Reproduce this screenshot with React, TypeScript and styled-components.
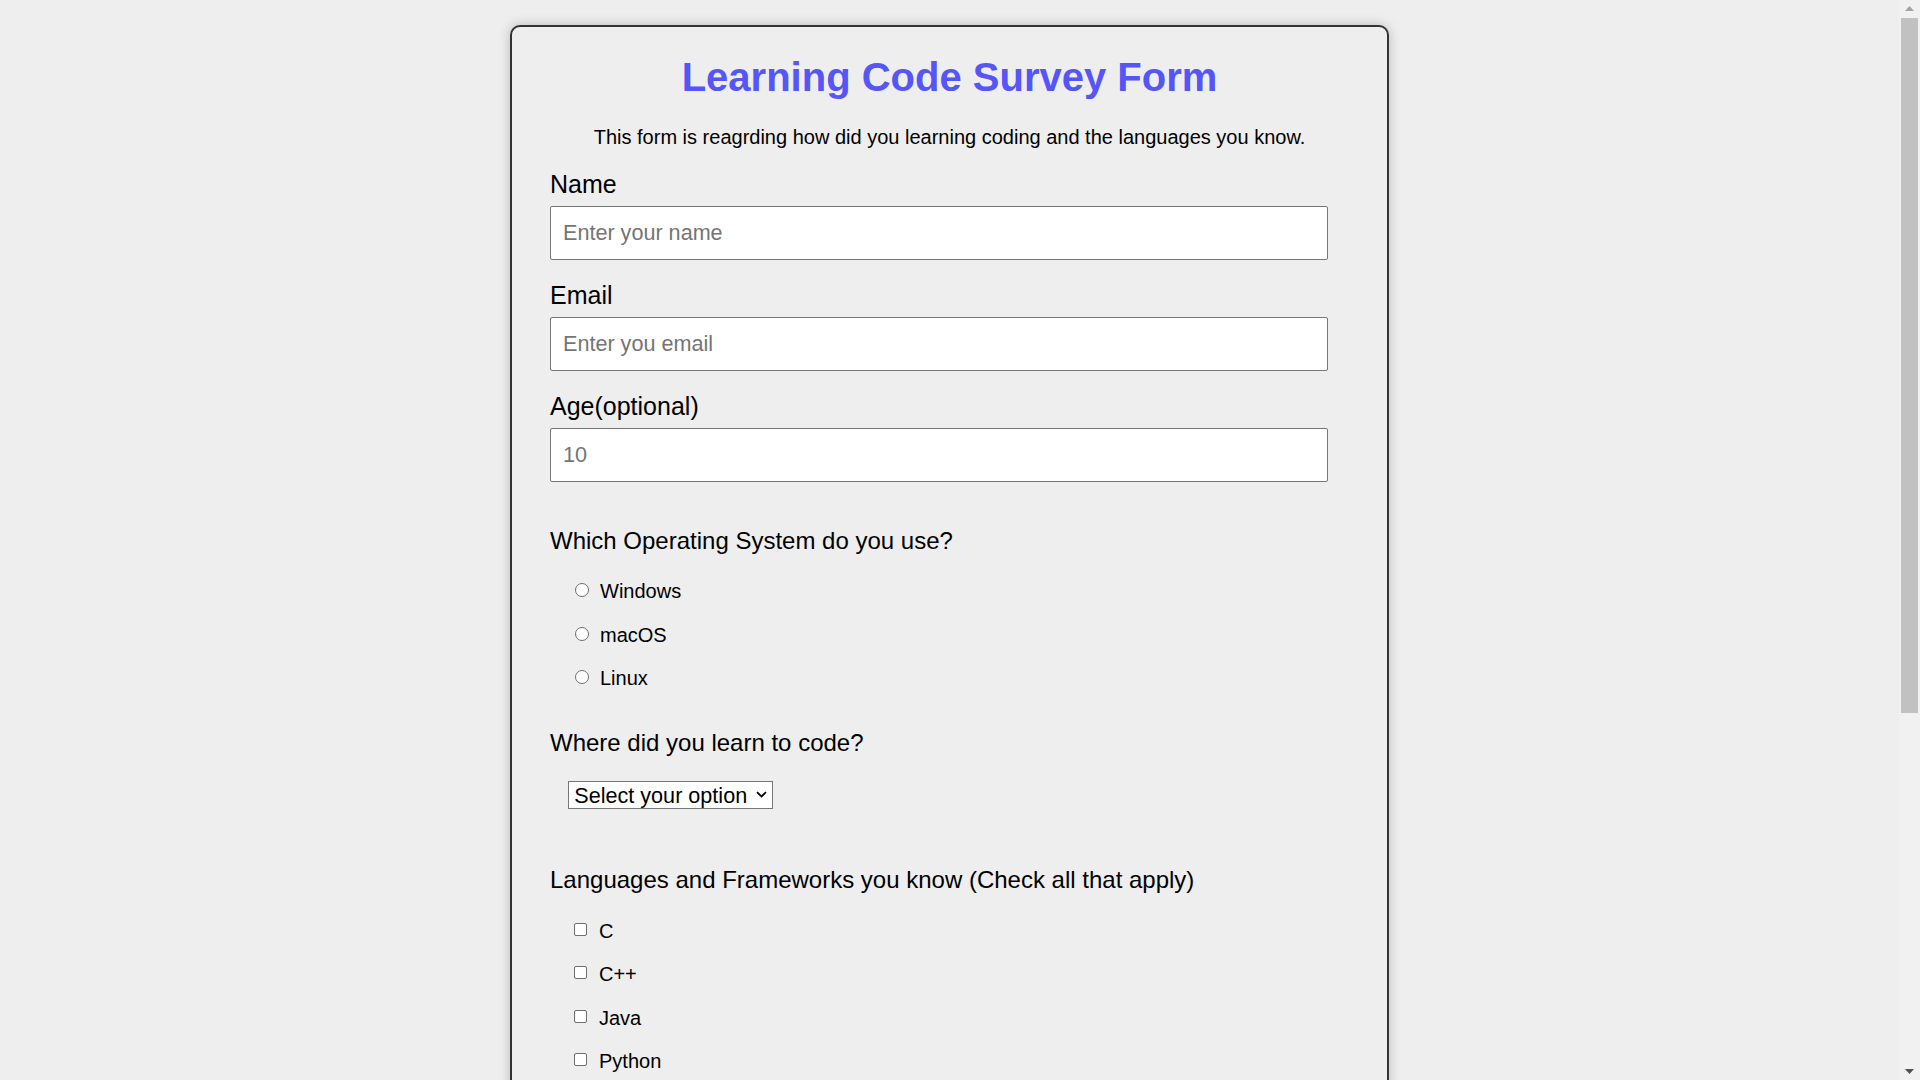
import React from "react";
import styled, { createGlobalStyle } from "styled-components";

const GlobalStyle = createGlobalStyle`
  html, body {
    margin: 0;
    background: #eeeeee;
    font-family: "Liberation Sans", Arial, sans-serif;
    color: #000;
  }
`;

const Page = styled.main`
  padding: 25px 21px 25px 0;
`;

const ScrollBar = styled.div`
  position: fixed;
  top: 0;
  right: 0;
  bottom: 0;
  width: 21px;
  display: flex;
  flex-direction: column;
  background: #f1f1f1;
  z-index: 10;
`;

const ScrollButton = styled.div`
  height: 17px;
  flex: none;
  display: flex;
  align-items: center;
  justify-content: center;
`;

const ScrollTrack = styled.div`
  flex: 1;
  padding: 1px 2px 0;
`;

const ScrollThumb = styled.div`
  height: 695px;
  background: #c1c1c1;
`;

const Card = styled.form`
  box-sizing: border-box;
  width: 879px;
  margin: 0 auto;
  padding: 0 38px 65px;
  background: #eeeeee;
  border: 2px solid #333333;
  border-radius: 10px;
  box-shadow: 0 0 12px rgba(0, 0, 0, 0.22);
`;

const Title = styled.h1`
  margin: 27px 0 0;
  font-size: 40px;
  line-height: 46px;
  font-weight: 700;
  color: #5555f8;
  text-align: center;
`;

const Description = styled.p`
  margin: 26px 0 20px;
  font-size: 20px;
  line-height: 23px;
  text-align: center;
`;

const Fields = styled.div`
  display: flex;
  flex-direction: column;
  gap: 20px;
`;

const Field = styled.div`
  display: flex;
  flex-direction: column;
  gap: 7px;
`;

const FieldLabel = styled.label`
  display: block;
  font-size: 25px;
  line-height: 30px;
`;

const TextInput = styled.input`
  display: block;
  box-sizing: border-box;
  width: 778px;
  height: 54px;
  margin: 0;
  padding: 0 12px;
  font-family: "Liberation Sans", Arial, sans-serif;
  font-size: 21.6px;
  color: #000;
  background: #ffffff;
  border: 1px solid #767676;
  border-radius: 2px;
  outline: none;

  &::placeholder {
    color: #757575;
  }
`;

const Question = styled.p<{ $top: number }>`
  margin: ${(p) => p.$top}px 0 0;
  font-size: 24px;
  line-height: 27.6px;
`;

const OptionList = styled.div<{ $gap: number }>`
  display: flex;
  flex-direction: column;
  gap: ${(p) => p.$gap}px;
  margin-top: 26px;
  padding-left: 20px;
`;

const Option = styled.label`
  display: block;
  height: 23px;
  font-size: 20px;
  line-height: 23px;
`;

const Radio = styled.input.attrs({ type: "radio" })`
  appearance: none;
  box-sizing: border-box;
  width: 14px;
  height: 14px;
  margin: 0 11px 0 5px;
  vertical-align: 1px;
  background: #ffffff;
  border: 1px solid #6f6f6f;
  border-radius: 50%;
`;

const Checkbox = styled.input.attrs({ type: "checkbox" })`
  appearance: none;
  box-sizing: border-box;
  width: 13px;
  height: 13px;
  margin: 0 12px 0 4px;
  vertical-align: 2px;
  background: #ffffff;
  border: 1px solid #6f6f6f;
  border-radius: 2px;
`;

const SelectRow = styled.div`
  margin: 24.7px 0 0 18.3px;
`;

const SelectWrap = styled.div`
  position: relative;
  display: inline-block;
`;

const Dropdown = styled.select`
  appearance: none;
  display: block;
  box-sizing: border-box;
  width: 205px;
  height: 28px;
  margin: 0;
  padding: 0 22px 0 5px;
  font-family: "Liberation Sans", Arial, sans-serif;
  font-size: 21.6px;
  color: #000;
  background: #ffffff;
  border: 1px solid #767676;
  border-radius: 0;
`;

const Chevron = styled.svg`
  position: absolute;
  right: 6px;
  top: 10px;
  pointer-events: none;
`;

const Comments = styled.textarea`
  display: block;
  box-sizing: border-box;
  width: 778px;
  height: 160px;
  margin-top: 24.7px;
  padding: 12px;
  font-family: "Liberation Sans", Arial, sans-serif;
  font-size: 21.6px;
  background: #ffffff;
  border: 1px solid #767676;
  border-radius: 2px;
  resize: vertical;

  &::placeholder {
    color: #757575;
  }
`;

const SubmitButton = styled.button`
  display: block;
  width: 778px;
  height: 45px;
  margin-top: 30px;
  font-family: "Liberation Sans", Arial, sans-serif;
  font-size: 21.6px;
  color: #ffffff;
  background: #5555f8;
  border: none;
  border-radius: 4px;
`;

const systems = ["Windows", "macOS", "Linux"];
const languages = ["C", "C++", "Java", "Python", "JavaScript", "HTML/CSS", "Other"];

export default function App() {
  return (
    <>
      <GlobalStyle />
      <ScrollBar aria-hidden="true">
        <ScrollButton>
          <svg width="9" height="5" viewBox="0 0 9 5">
            <path d="M0 5 L4.5 0 L9 5 Z" fill="#a3a3a3" />
          </svg>
        </ScrollButton>
        <ScrollTrack>
          <ScrollThumb />
        </ScrollTrack>
        <ScrollButton>
          <svg width="9" height="5" viewBox="0 0 9 5">
            <path d="M0 0 L9 0 L4.5 5 Z" fill="#505050" />
          </svg>
        </ScrollButton>
      </ScrollBar>
      <Page>
        <Card id="survey-form" onSubmit={(e) => e.preventDefault()}>
          <Title id="title">Learning Code Survey Form</Title>
          <Description id="description">
            This form is reagrding how did you learning coding and the languages you know.
          </Description>

          <Fields>
            <Field>
              <FieldLabel htmlFor="name" id="name-label">Name</FieldLabel>
              <TextInput id="name" type="text" placeholder="Enter your name" />
            </Field>
            <Field>
              <FieldLabel htmlFor="email" id="email-label">Email</FieldLabel>
              <TextInput id="email" type="email" placeholder="Enter you email" />
            </Field>
            <Field>
              <FieldLabel htmlFor="number" id="number-label">Age(optional)</FieldLabel>
              <TextInput id="number" type="number" placeholder="10" />
            </Field>
          </Fields>

          <Question $top={44.5}>Which Operating System do you use?</Question>
          <OptionList $gap={20.7}>
            {systems.map((s) => (
              <Option key={s}>
                <Radio name="os" value={s} />
                {s}
              </Option>
            ))}
          </OptionList>

          <Question $top={38.4}>Where did you learn to code?</Question>
          <SelectRow>
            <SelectWrap>
              <Dropdown id="dropdown" defaultValue="">
                <option value="" disabled>
                  Select your option
                </option>
                <option value="online">Online courses</option>
                <option value="bootcamp">Bootcamp</option>
                <option value="university">University</option>
                <option value="self">Self-taught</option>
              </Dropdown>
              <Chevron width="11" height="7" viewBox="0 0 11 7">
                <path d="M1 1.2 L5.5 5.5 L10 1.2" fill="none" stroke="#000" strokeWidth="1.8" />
              </Chevron>
            </SelectWrap>
          </SelectRow>

          <Question $top={57.3}>Languages and Frameworks you know (Check all that apply)</Question>
          <OptionList $gap={20.3}>
            {languages.map((l) => (
              <Option key={l}>
                <Checkbox value={l} />
                {l}
              </Option>
            ))}
          </OptionList>

          <Question $top={38.4}>Any comments or suggestions?</Question>
          <Comments placeholder="Enter your comment here..." />
          <SubmitButton type="submit" id="submit">Submit</SubmitButton>
        </Card>
      </Page>
    </>
  );
}
